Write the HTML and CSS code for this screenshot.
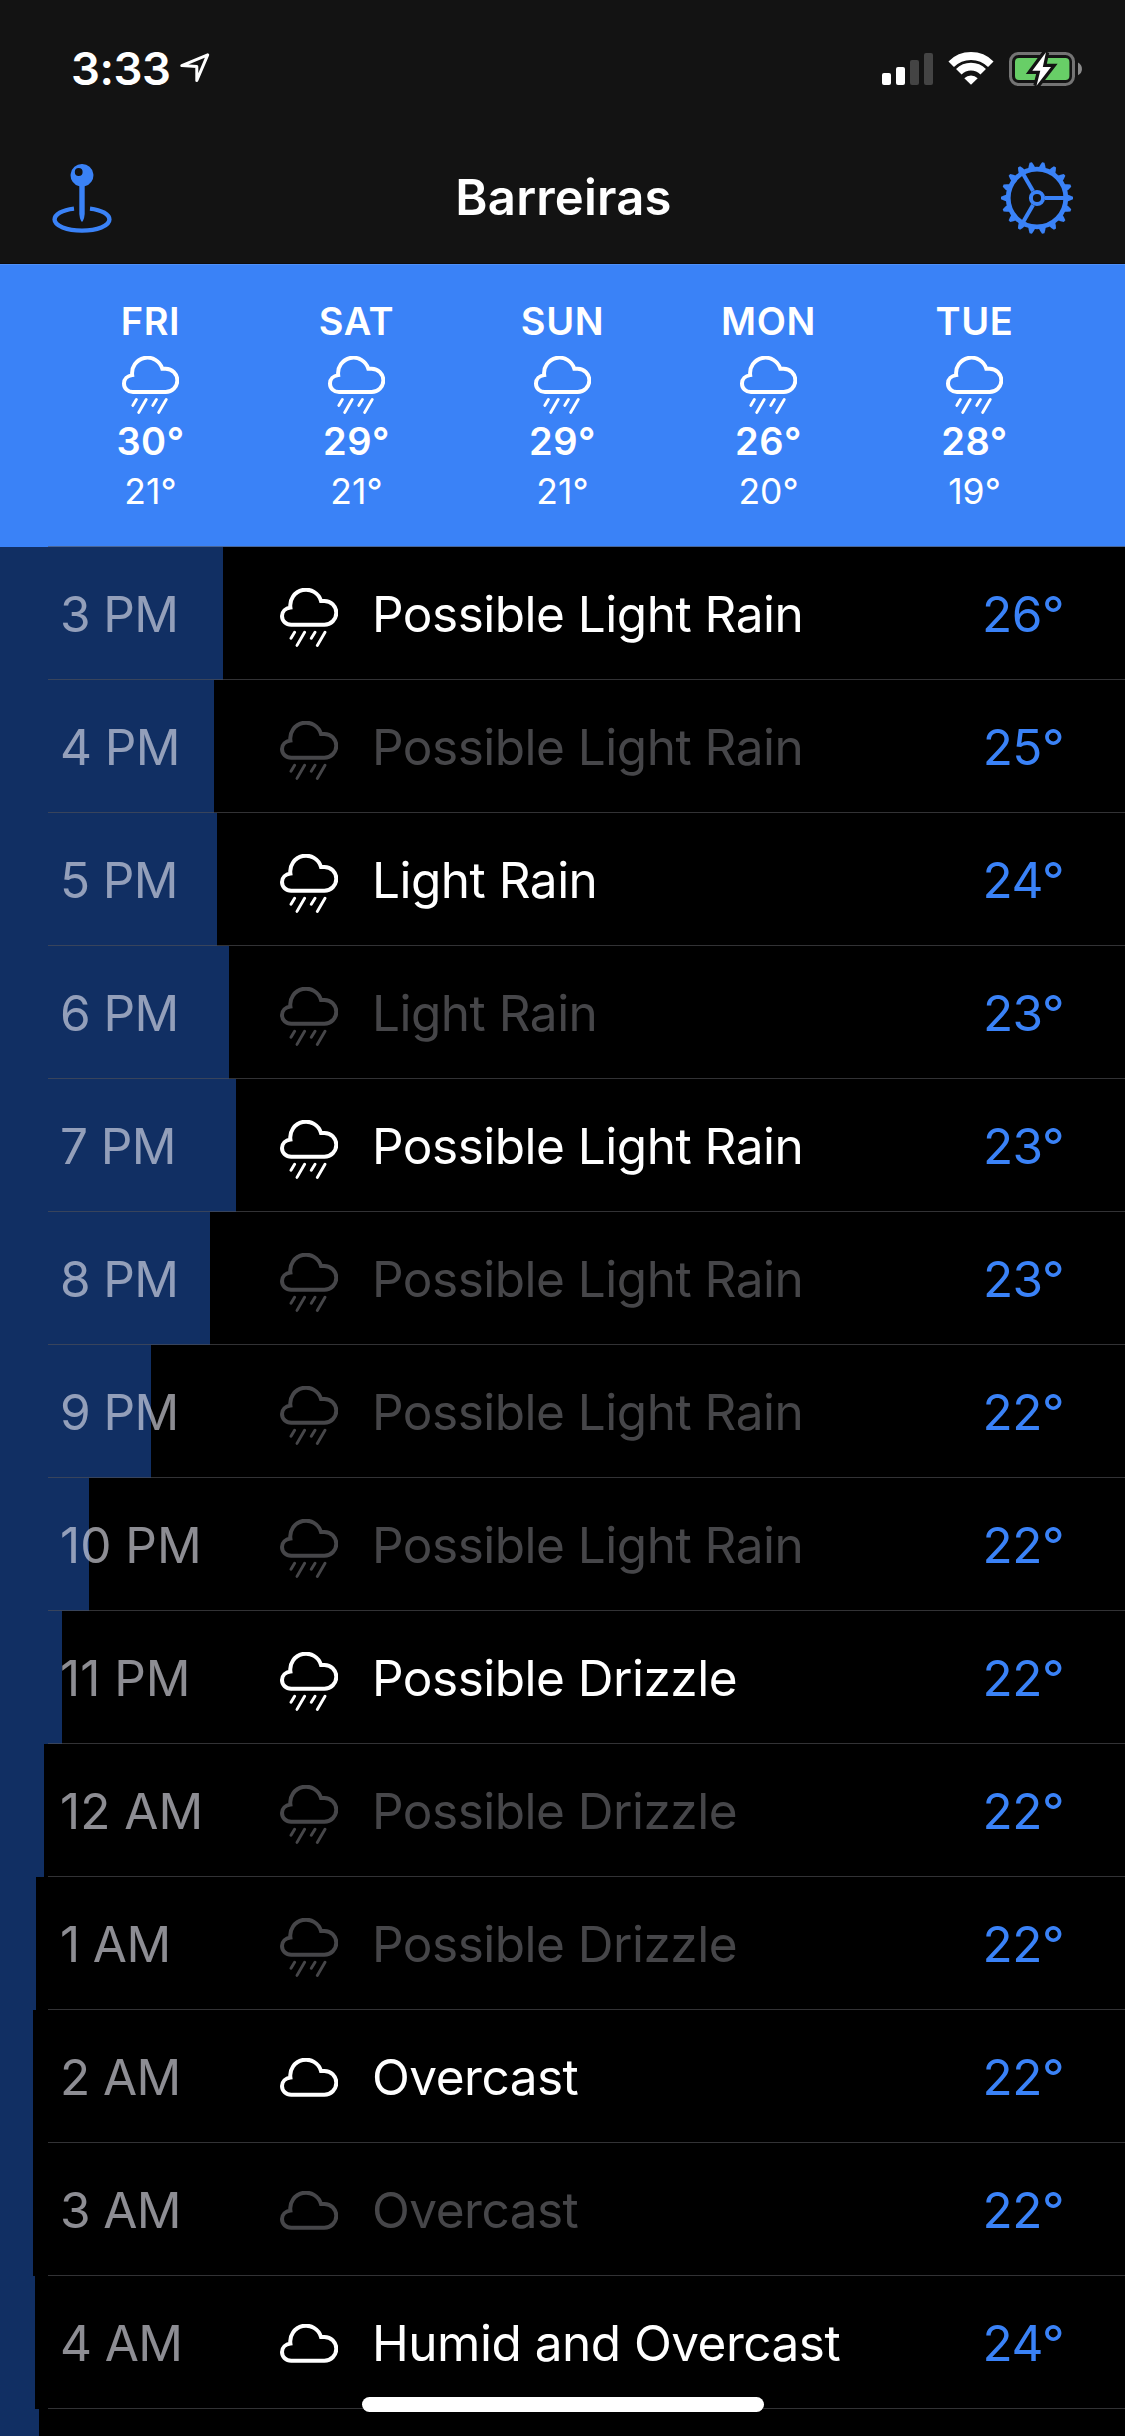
FILE: index.html
```html
<!DOCTYPE html>
<html lang="en">
<head>
<meta charset="utf-8">
<title>Barreiras</title>
<link rel="stylesheet" href="styles.css">
</head>
<body>
<svg class="sprite" width="0" height="0" aria-hidden="true">
  <symbol id="cloud" viewBox="0 0 58 59">
    <path d="M11.200 36.700H44.400A11.900 11.900 0 0 0 44.400 12.900H41A15.700 15.700 0 0 0 10.400 19.500C5.500 20.200 2 23.500 2 28C2 33 6 36.700 11.200 36.700Z" fill="none" stroke="currentColor" stroke-width="4"/>
  </symbol>
  <symbol id="rain" viewBox="0 0 58 59">
    <use href="#cloud"/>
    <path d="M14.600 44.200L11 50.300M24.600 44.200L17 57.400M35 44.200L31.300 50.300M45 44.200L37.300 57.400" fill="none" stroke="currentColor" stroke-width="2.900" stroke-linecap="round"/>
  </symbol>
</svg>
<div class="screen">
  <header class="header">
    <div class="status">
      <div class="status-left">
        <span class="clock">3:33</span>
        <svg class="arrow" width="32" height="32" viewBox="0 0 32 32"><path d="M28.700 2.800L2.800 13.600L17.800 14.600L17.800 28.500Z" fill="none" stroke="#fff" stroke-width="3" stroke-linejoin="round"/></svg>
      </div>
      <svg class="status-icons" width="204" height="40" viewBox="880 50 204 40">
        <g fill="#fff"><rect x="882" y="73" width="9" height="12" rx="2"/><rect x="896" y="67" width="9" height="18" rx="2"/></g>
        <g fill="#444"><rect x="910" y="60" width="9" height="25" rx="2"/><rect x="924" y="53" width="9" height="32" rx="2"/></g>
        <path d="M951.2 64.2A28 28 0 0 1 990.8 64.2M958.8 71.8A17.2 17.2 0 0 1 983.2 71.8" fill="none" stroke="#fff" stroke-width="7.8"/>
        <path d="M964.3 78.2A9.6 9.6 0 0 1 977.7 78.2L971 84.8Z" fill="#fff"/>
        <rect x="1010.5" y="53.5" width="63" height="31" rx="8" fill="none" stroke="#747474" stroke-width="3"/>
        <rect x="1015" y="58" width="54.4" height="22" rx="4" fill="#68ce67"/>
        <path d="M1078 62.5C1083.300 65 1083.300 73 1078 75.200Z" fill="#8a8a8a"/>
        <path d="M1046 52.300L1032.300 70.700H1040.300L1036.500 85.700L1051 67H1042.800Z" fill="#fff" stroke="#131313" stroke-width="6.500" paint-order="stroke"/>
      </svg>
    </div>
    <div class="nav">
      <svg class="pin" width="60" height="70" viewBox="0 0 60 70" fill="#3a82f7">
        <path fill-rule="evenodd" d="M30 0A11.3 11.3 0 0 1 32.700 22.300V50Q32.500 54 30.700 57.500H29.300Q27.500 54 27.300 50V22.300A11.300 11.300 0 0 1 30 0ZM26.700 4.100A3.900 3.900 0 1 0 26.700 11.900A3.900 3.900 0 1 0 26.700 4.100Z"/>
        <path d="M22 44.600C10 46 2.600 50.500 2.600 55.600C2.600 62 15 66.600 30 66.600S57.400 62 57.400 55.600C57.400 50.500 50 46 38 44.600" fill="none" stroke="#3a82f7" stroke-width="4.400"/>
      </svg>
      <h1 class="title">Barreiras</h1>
      <svg width="72" height="72" viewBox="-36 -36 72 72" fill="none" stroke="#3a82f7">
        <defs>
          <path id="tooth" d="M29 -4L33 -2.600L36 -1.200V1.200L33 2.600L29 4Z" fill="#3a82f7" stroke="none"/>
          <g id="teeth"><use href="#tooth"/><use href="#tooth" transform="rotate(20)"/><use href="#tooth" transform="rotate(40)"/></g>
          <g id="third"><use href="#teeth"/><use href="#teeth" transform="rotate(60)"/><path d="M8 0H28" stroke-width="4"/></g>
        </defs>
        <circle r="28.800" stroke-width="4.800"/>
        <circle r="6.100" stroke-width="4"/>
        <use href="#third"/><use href="#third" transform="rotate(120)"/><use href="#third" transform="rotate(240)"/>
      </svg>
    </div>
  </header>

  <section class="days">
    <div class="day"><span class="name">FRI</span><svg class="day-icon"><use href="#rain"/></svg><span class="high">30°</span><span class="low">21°</span></div>
    <div class="day"><span class="name">SAT</span><svg class="day-icon"><use href="#rain"/></svg><span class="high">29°</span><span class="low">21°</span></div>
    <div class="day"><span class="name">SUN</span><svg class="day-icon"><use href="#rain"/></svg><span class="high">29°</span><span class="low">21°</span></div>
    <div class="day"><span class="name">MON</span><svg class="day-icon"><use href="#rain"/></svg><span class="high">26°</span><span class="low">20°</span></div>
    <div class="day"><span class="name">TUE</span><svg class="day-icon"><use href="#rain"/></svg><span class="high">28°</span><span class="low">19°</span></div>
  </section>

  <main class="hours">
    <div class="hour"><i class="bar" style="width:223px"></i><span class="time">3 PM</span><svg class="icon"><use href="#rain"/></svg><span class="summary">Possible Light Rain</span><span class="temp">26°</span></div>
    <div class="hour same"><i class="bar" style="width:214px"></i><span class="time">4 PM</span><svg class="icon"><use href="#rain"/></svg><span class="summary">Possible Light Rain</span><span class="temp">25°</span></div>
    <div class="hour"><i class="bar" style="width:217px"></i><span class="time">5 PM</span><svg class="icon"><use href="#rain"/></svg><span class="summary">Light Rain</span><span class="temp">24°</span></div>
    <div class="hour same"><i class="bar" style="width:229px"></i><span class="time">6 PM</span><svg class="icon"><use href="#rain"/></svg><span class="summary">Light Rain</span><span class="temp">23°</span></div>
    <div class="hour"><i class="bar" style="width:236px"></i><span class="time">7 PM</span><svg class="icon"><use href="#rain"/></svg><span class="summary">Possible Light Rain</span><span class="temp">23°</span></div>
    <div class="hour same"><i class="bar" style="width:210px"></i><span class="time">8 PM</span><svg class="icon"><use href="#rain"/></svg><span class="summary">Possible Light Rain</span><span class="temp">23°</span></div>
    <div class="hour same"><i class="bar" style="width:151px"></i><span class="time">9 PM</span><svg class="icon"><use href="#rain"/></svg><span class="summary">Possible Light Rain</span><span class="temp">22°</span></div>
    <div class="hour same"><i class="bar" style="width:89px"></i><span class="time wide">10 PM</span><svg class="icon"><use href="#rain"/></svg><span class="summary">Possible Light Rain</span><span class="temp">22°</span></div>
    <div class="hour"><i class="bar" style="width:62px"></i><span class="time wide">11 PM</span><svg class="icon"><use href="#rain"/></svg><span class="summary">Possible Drizzle</span><span class="temp">22°</span></div>
    <div class="hour same"><i class="bar" style="width:44px"></i><span class="time wide">12 AM</span><svg class="icon"><use href="#rain"/></svg><span class="summary">Possible Drizzle</span><span class="temp">22°</span></div>
    <div class="hour same"><i class="bar" style="width:36px"></i><span class="time">1 AM</span><svg class="icon"><use href="#rain"/></svg><span class="summary">Possible Drizzle</span><span class="temp">22°</span></div>
    <div class="hour"><i class="bar" style="width:33px"></i><span class="time">2 AM</span><svg class="icon dry"><use href="#cloud"/></svg><span class="summary">Overcast</span><span class="temp">22°</span></div>
    <div class="hour same"><i class="bar" style="width:33px"></i><span class="time">3 AM</span><svg class="icon dry"><use href="#cloud"/></svg><span class="summary">Overcast</span><span class="temp">22°</span></div>
    <div class="hour"><i class="bar" style="width:35px"></i><span class="time">4 AM</span><svg class="icon dry"><use href="#cloud"/></svg><span class="summary">Humid and Overcast</span><span class="temp">24°</span></div>
    <div class="hour"><i class="bar" style="width:39px"></i></div>
  </main>
  <div class="home"></div>
</div>
</body>
</html>
```
FILE: styles.css
```css
* { box-sizing: border-box; }
body { margin: 0; background: #000; }
svg { display: block; flex: none; }
.sprite { position: absolute; }
.screen {
  position: relative;
  width: 1125px;
  height: 2436px;
  overflow: hidden;
  background: #000;
  color: #fff;
  font-family: Inter, "Liberation Sans", sans-serif;
}

.header {
  height: 264px;
  background: #131313;
  border-bottom: 1px solid #0b0b0e;
}
.status {
  display: flex;
  justify-content: space-between;
  height: 132px;
  padding: 50px 41px 0 71px;
}
.status-left { display: flex; gap: 8px; }
.clock {
  width: 100px;
  font-size: 45.5px;
  line-height: 37px;
  font-weight: 600;
  letter-spacing: -0.5px;
  white-space: nowrap;
}
.arrow { margin-top: 2px; }
.nav {
  display: grid;
  grid-template-columns: 72px 1fr 72px;
  align-items: center;
  height: 131px;
  padding: 1px 52px 0;
}
.pin { margin-top: 2px; }
.title {
  margin: 0;
  font-size: 49px;
  line-height: 60px;
  font-weight: 600;
  letter-spacing: 0.2px;
  text-align: center;
  padding-left: 2px;
}

.days {
  position: relative;
  display: grid;
  grid-template-columns: repeat(5, 206px);
  justify-content: center;
  height: 283px;
  padding-top: 35px;
  background: #3a82f7;
  border-top: 1px solid #4e90f8;
}
.days::after, .hour::after {
  content: "";
  position: absolute;
  left: 48px;
  right: 0;
  bottom: 0;
  height: 1px;
  background: rgba(84, 84, 88, 0.6);
}
.day { display: flex; flex-direction: column; align-items: center; }
.name { font-size: 38px; line-height: 42px; font-weight: 600; letter-spacing: 0.6px; }
.day-icon { width: 57px; height: 58px; margin-top: 14px; }
.high { margin-top: 6px; font-size: 38px; line-height: 42px; font-weight: 600; letter-spacing: 0.5px; }
.low { margin-top: 9px; font-size: 35.5px; line-height: 42px; }

.hour {
  position: relative;
  display: flex;
  align-items: center;
  height: 133px;
  padding: 0 61px 0 60px;
  font-size: 49.5px;
  line-height: 60px;
  white-space: nowrap;
}
.bar { position: absolute; left: 0; top: 0; height: 133px; background: #112f63; }
.time { position: relative; width: 220px; color: rgba(235, 235, 245, 0.6); letter-spacing: -0.6px; }
.wide { letter-spacing: 0; }
.icon { width: 58px; height: 59px; margin-top: 8px; }
.dry { margin-top: 21px; }
.summary { flex: 1; margin-left: 34px; letter-spacing: -0.5px; }
.temp { color: #3a82f7; letter-spacing: -0.5px; }
.same .icon, .same .summary { color: #464649; }

.home {
  position: absolute;
  left: 362px;
  top: 2397px;
  width: 402px;
  height: 15px;
  border-radius: 7.5px;
  background: #fff;
}
```
